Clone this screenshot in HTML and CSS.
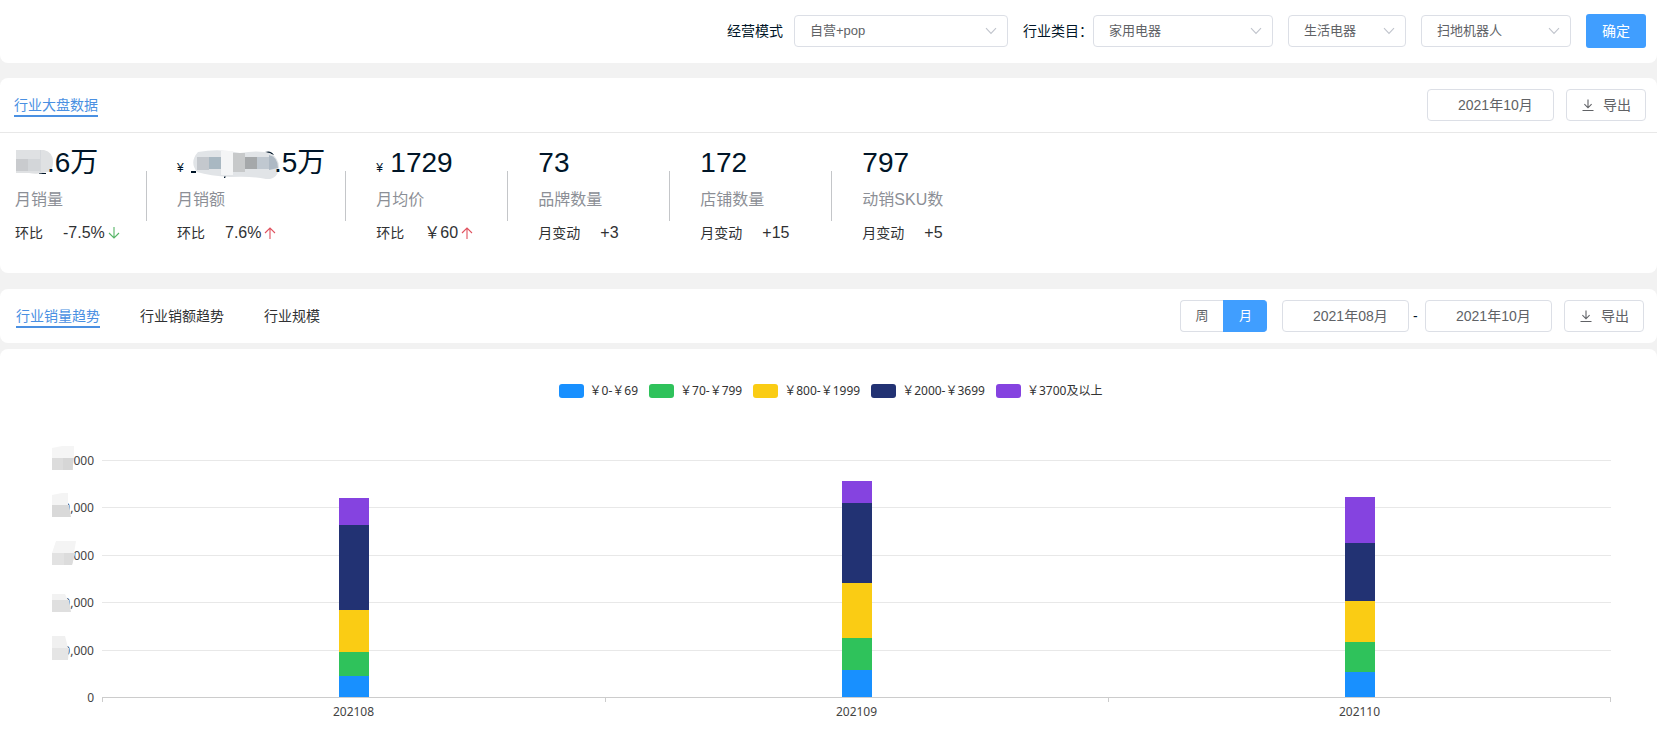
FILE: index.html
```html
<!DOCTYPE html>
<html lang="zh-CN">
<head>
<meta charset="utf-8">
<title>行业大盘数据</title>
<meta name="viewport" content="width=device-width, initial-scale=1">
<link rel="stylesheet" href="styles.css">
</head>
<body>
<svg class="defs" aria-hidden="true">
  <symbol id="chevron" viewBox="0 0 12 12"><path d="M1 3.2 6 8.4l5-5.2" fill="none" stroke="#c0c4cc" stroke-width="1.1"/></symbol>
  <symbol id="download" viewBox="0 0 14 14"><path d="M7 1.5v8.2M3.4 6.2 7 9.8l3.6-3.6M1.5 12.5h11" fill="none" stroke="#606266" stroke-width="1.1"/></symbol>
  <symbol id="arrow-up" viewBox="0 0 12 14"><path d="M6 13V2M1 7l5-5 5 5" fill="none" stroke="#e0525f" stroke-width="1.1"/></symbol>
  <symbol id="arrow-down" viewBox="0 0 12 14"><path d="M6 1v11M1 7l5 5 5-5" fill="none" stroke="#57b567" stroke-width="1.1"/></symbol>
</svg>

<form class="panel filters">
  <label class="filter-label" for="mode">经营模式</label>
  <span class="select mode"><select id="mode"><option>自营+pop</option></select><svg><use href="#chevron"/></svg></span>
  <label class="filter-label category" for="cat1">行业类目：</label>
  <span class="select cat1"><select id="cat1"><option>家用电器</option></select><svg><use href="#chevron"/></svg></span>
  <span class="select cat2"><select aria-label="二级类目"><option>生活电器</option></select><svg><use href="#chevron"/></svg></span>
  <span class="select cat3"><select aria-label="三级类目"><option>扫地机器人</option></select><svg><use href="#chevron"/></svg></span>
  <button class="confirm" type="button">确定</button>
</form>

<section class="panel overview">
  <header class="overview-head">
    <a class="tab active" href="#overview">行业大盘数据</a>
    <div class="tools">
      <input class="date" type="text" value="2021年10月" aria-label="月份" readonly>
      <button class="export" type="button"><svg><use href="#download"/></svg>导出</button>
    </div>
  </header>
  <ul class="metrics">
    <li class="metric"><div>
      <p class="value"><svg class="mask mask-sales" viewBox="0 0 32 28"><path d="M24 24h7v1h-7z" fill="#001528"/><path d="M1 1h28q9 2 9 12t-6 10q-9 3-18 1H1z" fill="#dfe1e3"/><path d="M1 10h12v12H1z" fill="#c9cbce"/><path d="M13 10h12v12H13z" fill="#d3d6d9"/><path d="M25 1h1v22h-1z" fill="#d5d8dc"/></svg>.6万</p>
      <p class="name">月销量</p>
      <p class="change"><span>环比</span><b>-7.5%</b><svg><use href="#arrow-down"/></svg></p>
    </div></li>
    <li class="metric"><div>
      <p class="value"><small>¥</small><svg class="mask mask-amount" viewBox="0 0 83 28"><path d="M0 22h5v2H0zM33 26h3l-2 3h-1zM74 3q6-2 9 3z" fill="#001528"/><path d="M7 3Q29-1 49 4q18-3 30 0 9 5 9 14-1 13-13 12-12-3-36-2Q19 27 6 23-2 13 7 3z" fill="#e1e4e7"/><path d="M6 8h12v13H6z" fill="#c4c8cd"/><path d="M18 8h12v12H18z" fill="#a9b8c2"/><path d="M30 2h12v24H30z" fill="#f4f5f6"/><path d="M42 4h12v19H42z" fill="#c7c9ca"/><path d="M54 8h12v12H54z" fill="#a5a8aa"/><path d="M66 8h12v12H66z" fill="#c0c8d0"/><path d="M78 6q9 2 9 13l-9 2z" fill="#aeb9c4"/></svg>.5万</p>
      <p class="name">月销额</p>
      <p class="change"><span>环比</span><b>7.6%</b><svg><use href="#arrow-up"/></svg></p>
    </div></li>
    <li class="metric"><div>
      <p class="value"><small>¥</small>1729</p>
      <p class="name">月均价</p>
      <p class="change"><span>环比</span><b>￥60</b><svg><use href="#arrow-up"/></svg></p>
    </div></li>
    <li class="metric"><div>
      <p class="value">73</p>
      <p class="name">品牌数量</p>
      <p class="change"><span>月变动</span><b>+3</b></p>
    </div></li>
    <li class="metric"><div>
      <p class="value">172</p>
      <p class="name">店铺数量</p>
      <p class="change"><span>月变动</span><b>+15</b></p>
    </div></li>
    <li class="metric"><div>
      <p class="value">797</p>
      <p class="name">动销SKU数</p>
      <p class="change"><span>月变动</span><b>+5</b></p>
    </div></li>
  </ul>
</section>

<section class="panel trend-head">
  <nav class="tabs">
    <a class="tab active" href="#sales">行业销量趋势</a>
    <a class="tab" href="#amount">行业销额趋势</a>
    <a class="tab" href="#scale">行业规模</a>
  </nav>
  <div class="tools">
    <div class="segment">
      <label><input type="radio" name="period"><span>周</span></label>
      <label><input type="radio" name="period" checked><span>月</span></label>
    </div>
    <div class="range">
      <input class="date" type="text" value="2021年08月" aria-label="开始月份" readonly>
      <span class="dash">-</span>
      <input class="date" type="text" value="2021年10月" aria-label="结束月份" readonly>
    </div>
    <button class="export" type="button"><svg><use href="#download"/></svg>导出</button>
  </div>
</section>

<section class="panel chart">
  <ul class="legend">
    <li><i class="s1"></i>￥0-￥69</li>
    <li><i class="s2"></i>￥70-￥799</li>
    <li><i class="s3"></i>￥800-￥1999</li>
    <li><i class="s4"></i>￥2000-￥3699</li>
    <li><i class="s5"></i>￥3700及以上</li>
  </ul>
  <div class="graph">
    <div class="y-axis">
      <span>000<svg class="blot" viewBox="0 0 24 26"><path d="M0 2 10 0h12v12H0z" fill="#f5f5f5"/><path d="M0 12h21v12H0z" fill="#dcdcdc"/><path d="M11 12h11l-2 12h-9z" fill="#d6d6d6"/></svg></span>
      <span>0,000<svg class="blot" viewBox="0 0 24 26"><path d="M0 2 10 0h6v12H0z" fill="#f4f4f4"/><path d="M0 12h17l2 12H0z" fill="#d9d9d9"/></svg></span>
      <span>000<svg class="blot" viewBox="0 0 24 26"><path d="M4 0h20l-2 12H0z" fill="#f4f4f4"/><path d="M0 12h23l-3 12H0z" fill="#e2e2e2"/><path d="M12 12h11l-3 12h-8z" fill="#dcdcdc"/></svg></span>
      <span>0,000<svg class="blot" viewBox="0 0 24 26"><path d="M0 6h13l3 6H0z" fill="#f2f2f2"/><path d="M0 12h17l2 12H0z" fill="#dfdfdf"/></svg></span>
      <span>0,000<svg class="blot" viewBox="0 0 24 26"><path d="M0 0h13l3 12H0z" fill="#f0f0f0"/><path d="M0 12h17l-1 12H0z" fill="#e5e5e5"/></svg></span>
      <span>0</span>
    </div>
    <div class="plot">
      <div class="gridlines"><i></i><i></i><i></i><i></i><i></i></div>
      <div class="bars">
        <div class="bar"><i class="s5" style="height:11.4%"></i><i class="s4" style="height:35.8%"></i><i class="s3" style="height:17.7%"></i><i class="s2" style="height:10.3%"></i><i class="s1" style="height:8.9%"></i></div>
        <div class="bar"><i class="s5" style="height:9.2%"></i><i class="s4" style="height:33.7%"></i><i class="s3" style="height:23.3%"></i><i class="s2" style="height:13.6%"></i><i class="s1" style="height:11.4%"></i></div>
        <div class="bar"><i class="s5" style="height:19.6%"></i><i class="s4" style="height:24.1%"></i><i class="s3" style="height:17.6%"></i><i class="s2" style="height:12.7%"></i><i class="s1" style="height:10.4%"></i></div>
      </div>
    </div>
    <div class="x-axis"><span>202108</span><span>202109</span><span>202110</span></div>
  </div>
</section>
</body>
</html>
```
FILE: styles.css
```css
* { box-sizing: border-box; }
body {
  margin: 0;
  min-height: 100vh;
  display: flex;
  flex-direction: column;
  background: #f2f2f2;
  color: #303133;
  font: 14px/20px "Liberation Sans", "Noto Sans CJK SC", sans-serif;
}
ul, p { margin: 0; padding: 0; list-style: none; }
a { text-decoration: none; color: inherit; }
input, select, button { font: inherit; margin: 0; }
.defs { position: absolute; width: 0; height: 0; }
.panel { background: #fff; border-radius: 8px; }

.filters {
  display: flex;
  align-items: center;
  justify-content: flex-end;
  padding: 14px 11px 15px;
  margin-bottom: 15px;
  border-radius: 0 0 8px 8px;
}
.filter-label { color: #001528; margin-right: 11px; }
.category { margin: 0 0 0 15px; }
.select { position: relative; }
.select select {
  width: 100%;
  height: 32px;
  padding: 0 30px 1px 15px;
  appearance: none;
  border: 1px solid #dcdfe6;
  border-radius: 4px;
  background: #fff;
  color: #606266;
  font-size: 13px;
}
.select svg { position: absolute; right: 11px; top: 10px; width: 12px; height: 12px; pointer-events: none; }
.mode { width: 214px; }
.cat1 { width: 180px; }
.cat2 { width: 118px; margin-left: 15px; }
.cat3 { width: 150px; margin-left: 15px; }
.confirm {
  width: 60px;
  height: 34px;
  margin-left: 15px;
  padding: 0;
  border: 0;
  border-radius: 3px;
  background: #409eff;
  color: #fff;
}

.tab { padding-top: 2px; border-bottom: 2px solid transparent; }
.tab.active { color: #4a90e2; border-color: #4a90e2; }
.tools { display: flex; align-items: center; }
.date {
  width: 127px;
  height: 32px;
  padding: 0 20px 2px 30px;
  border: 1px solid #dcdfe6;
  border-radius: 4px;
  background: #fff;
  color: #606266;
}
.export {
  display: flex;
  align-items: center;
  justify-content: center;
  gap: 8px;
  width: 80px;
  height: 32px;
  margin-left: 12px;
  padding: 0;
  border: 1px solid #dcdfe6;
  border-radius: 4px;
  background: #fff;
  color: #606266;
}
.export svg { width: 14px; height: 14px; }

.overview { margin-bottom: 16px; }
.overview-head {
  display: flex;
  align-items: center;
  justify-content: space-between;
  padding: 11px 11px 11px 14px;
  border-bottom: 1px solid #e8e8e8;
}
.metrics { display: flex; flex-wrap: wrap; padding: 10px 15px 28px; }
.metric { display: flex; }
.metric > div { min-width: 131px; padding-right: 20px; }
.metric + .metric::before {
  content: "";
  width: 1px;
  height: 50px;
  margin: 28px 30px 0 0;
  background: #c4c6c9;
}
.value { display: flex; align-items: center; font-size: 28px; line-height: 40px; color: #001528; }
.value small { width: 14px; font-size: 12px; line-height: 20px; padding-top: 10px; }
.mask { height: 28px; overflow: visible; }
.mask-sales { width: 32px; }
.mask-amount { width: 83px; }
.name { margin: 5px 0 9px; font-size: 16px; line-height: 24px; color: #8c8f96; }
.change { display: flex; align-items: center; line-height: 24px; }
.change b { margin-left: 20px; font-size: 16px; font-weight: 400; }
.change svg { width: 12px; height: 14px; margin-left: 3px; }

.trend-head {
  display: flex;
  align-items: center;
  justify-content: space-between;
  padding: 11px 13px 11px 16px;
  margin-bottom: 6px;
}
.tabs { display: flex; gap: 40px; }
.segment { display: flex; margin-right: 15px; }
.segment input { position: absolute; opacity: 0; }
.segment span {
  display: block;
  width: 44px;
  border: 1px solid #dcdfe6;
  border-right: 0;
  border-radius: 4px 0 0 4px;
  color: #606266;
  font-size: 13px;
  line-height: 30px;
  text-align: center;
}
.segment label:first-child span { width: 43px; }
.segment label + label span { border-radius: 0 4px 4px 0; }
.segment input:checked + span { background: #409eff; border-color: #409eff; color: #fff; }
.range { display: flex; align-items: center; }
.dash { width: 16px; padding-left: 4px; color: #001528; }

.s1 { background: #1890ff; }
.s2 { background: #2fc25b; }
.s3 { background: #facc14; }
.s4 { background: #223273; }
.s5 { background: #8543e0; }
.chart {
  flex: 1;
  padding: 32px 46px 20px 50px;
  border-radius: 8px 8px 0 0;
  color: #444;
  font-family: "Noto Sans", "Noto Sans CJK SC", sans-serif;
  font-size: 12px;
}
.legend { display: flex; justify-content: center; gap: 11px; color: #333; }
.legend li { display: flex; align-items: center; }
.legend i { width: 25px; height: 14px; margin-right: 6px; border-radius: 3px; }
.graph { display: grid; grid-template-columns: 52px 1fr; margin-top: 59px; }
.y-axis {
  display: flex;
  flex-direction: column;
  justify-content: space-between;
  margin: -9px 8px -10px 0;
  text-align: right;
}
.y-axis span { position: relative; }
.blot { position: absolute; left: 2px; top: -5px; width: 24px; height: 26px; }
.plot { position: relative; height: 238px; border-bottom: 1px solid #ccc; }
.gridlines { display: flex; flex-direction: column; height: 100%; }
.gridlines i { flex: 1; border-top: 1px solid #e8e8e8; }
.bars { position: absolute; inset: 0; display: flex; }
.bar { flex: 1; display: flex; flex-direction: column; justify-content: flex-end; align-items: center; }
.bar i { width: 30px; }
.x-axis { grid-column: 2; display: flex; text-align: center; }
.x-axis span {
  flex: 1;
  padding-top: 4px;
  background: linear-gradient(#ccc, #ccc) left top / 1px 4px no-repeat;
}
.x-axis span:last-child {
  background: linear-gradient(#ccc, #ccc) left top / 1px 4px no-repeat, linear-gradient(#ccc, #ccc) right top / 1px 4px no-repeat;
}
```
